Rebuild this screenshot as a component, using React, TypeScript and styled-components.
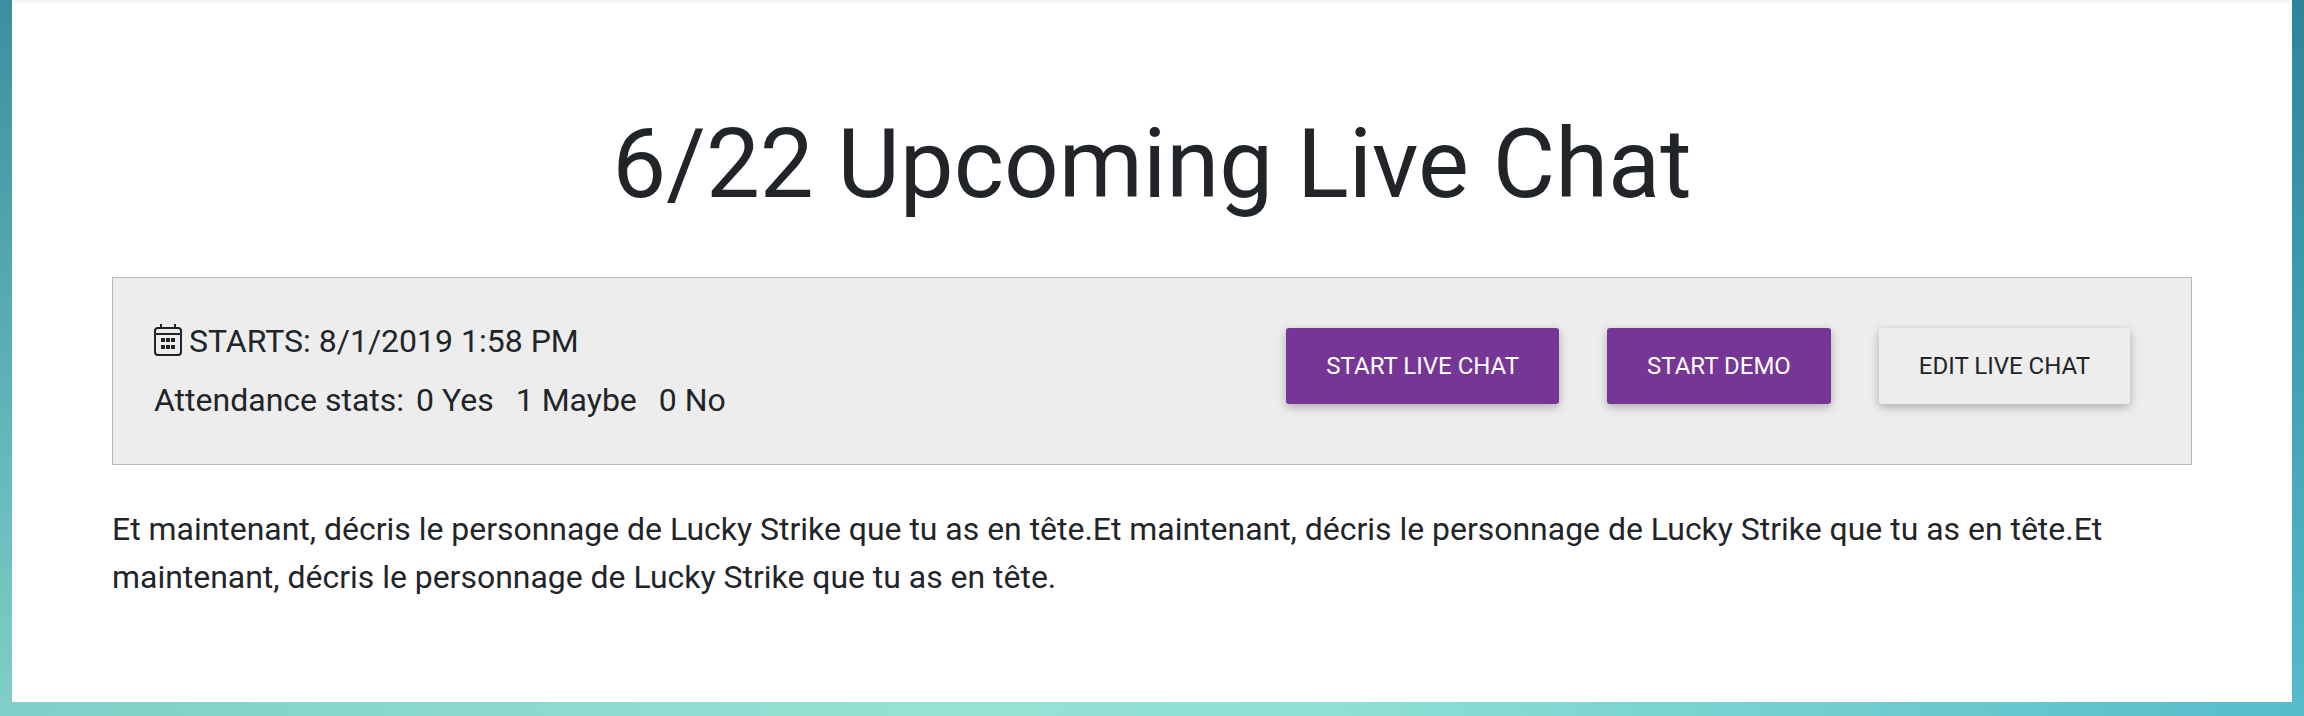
import styled, { createGlobalStyle } from "styled-components";

const GlobalStyle = createGlobalStyle`
	html, body {
		margin: 0;
		padding: 0;
	}
	body {
		font-family: Roboto, "Liberation Sans", sans-serif;
		color: #212529;
	}
`;

const Page = styled.div`
	box-sizing: border-box;
	width: 2304px;
	height: 716px;
	overflow: hidden;
	padding: 0 12px 14px;
	background:
		linear-gradient(90deg, #80cfc8 0%, #95e2d4 40%, #8fe0d4 58%, #55bccb 100%) bottom / 100% 14px no-repeat,
		linear-gradient(180deg, #3b8fa0 0%, #80cfc8 100%) left / 12px 100% no-repeat,
		linear-gradient(180deg, #2e8599 0%, #55bccb 100%) right / 12px 100% no-repeat;
`;

const Card = styled.main`
	box-sizing: border-box;
	height: 702px;
	padding: 107px 100px 0;
	background: #fff;
	border-radius: 0 0 6px 6px;
	box-shadow: inset 0 3px 3px -1px rgba(0, 0, 0, 0.05);
`;

const Title = styled.h1`
	margin: 0 0 56px;
	font-size: 96px;
	font-weight: 400;
	line-height: 114px;
	text-align: center;
	color: #212529;
`;

const InfoPanel = styled.section`
	box-sizing: border-box;
	display: flex;
	align-items: center;
	justify-content: space-between;
	height: 188px;
	padding: 0 61px 0 41px;
	background: #ededed;
	border: 1px solid #b8b8b8;
`;

const Details = styled.div`
	display: flex;
	flex-direction: column;
	gap: 17px;
	margin-bottom: 1px;
	font-size: 32px;
	line-height: 42px;
	color: #212529;
`;

const Row = styled.div`
	display: flex;
	align-items: center;
`;

const CalendarIcon = styled.svg`
	width: 28px;
	height: 32px;
	margin-right: 7px;
	margin-top: -2px;
`;

const Stat = styled.span`
	margin-left: 12px;
	margin-right: 10px;
`;

const Actions = styled.div`
	display: flex;
	gap: 48px;
	margin-bottom: 10px;
`;

const Button = styled.button<{ $primary?: boolean }>`
	height: 76px;
	padding: 0 40px;
	border: 0;
	border-radius: 3px;
	font-family: inherit;
	font-size: 24px;
	text-transform: uppercase;
	color: ${(p) => (p.$primary ? "#fff" : "#212529")};
	background: ${(p) => (p.$primary ? "#753695" : "#ededed")};
	box-shadow: 0 3px 10px rgba(0, 0, 0, 0.28);
`;

const Description = styled.p`
	margin: 40px 0 0;
	font-size: 31.94px;
	line-height: 48px;
	color: #212529;
`;

export default function App() {
	return (
		<Page>
			<GlobalStyle />
			<Card>
				<Title>6/22 Upcoming Live Chat</Title>
				<InfoPanel>
					<Details>
						<Row>
							<CalendarIcon viewBox="0 0 28 32" fill="none" stroke="#212529" strokeWidth="2">
								<rect x="1" y="4" width="26" height="27" rx="3" />
								<path d="M1 10h26M7 0v5M21 0v5" />
								<path d="M7 14h4v4H7zM12 14h4v4h-4zM17 14h4v4h-4zM7 21h4v4H7zM12 21h4v4h-4zM17 21h4v4h-4z" fill="#212529" stroke="none" />
							</CalendarIcon>
							STARTS: 8/1/2019 1:58 PM
						</Row>
						<Row>
							Attendance stats:
							<Stat>0 Yes</Stat>
							<Stat>1 Maybe</Stat>
							<Stat>0 No</Stat>
						</Row>
					</Details>
					<Actions>
						<Button $primary>Start Live Chat</Button>
						<Button $primary>Start Demo</Button>
						<Button>Edit Live Chat</Button>
					</Actions>
				</InfoPanel>
				<Description>
					Et maintenant, décris le personnage de Lucky Strike que tu as en tête.Et maintenant, décris le personnage de Lucky Strike que tu as en tête.Et maintenant, décris le personnage de Lucky Strike que tu as en tête.
				</Description>
			</Card>
		</Page>
	);
}
